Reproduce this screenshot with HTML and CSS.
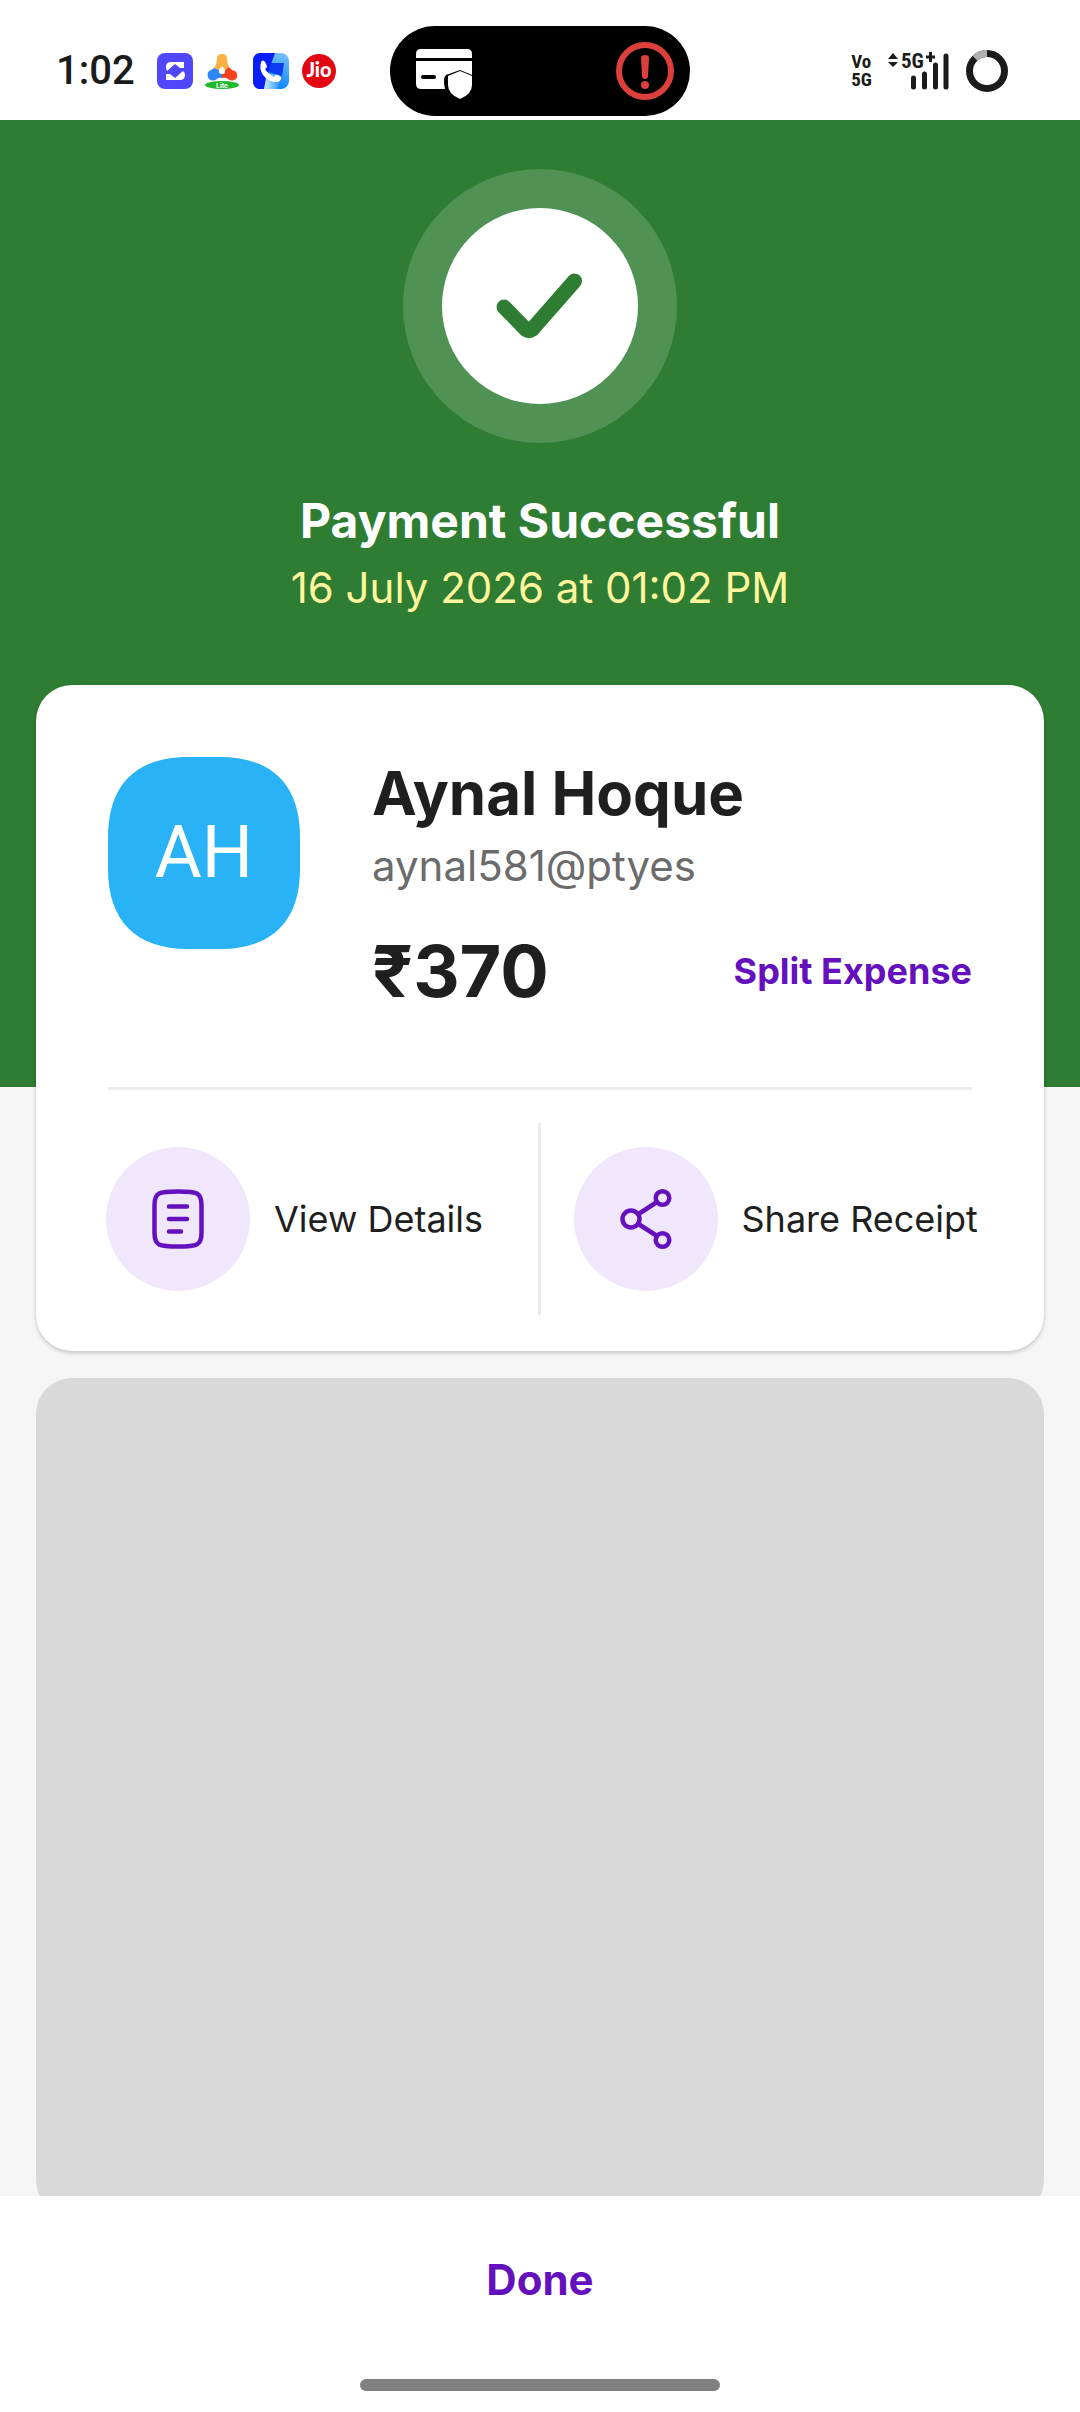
FILE: index.html
```html
<!DOCTYPE html>
<html lang="en">
<head>
<meta charset="utf-8">
<meta name="viewport" content="width=device-width, initial-scale=1">
<title>Payment Successful</title>
<link rel="stylesheet" href="styles.css">
</head>
<body>
<header class="status">
  <div class="status-left">
    <time class="clock">1:02</time>
    <svg class="app" viewBox="0 0 36 36" aria-hidden="true">
      <rect width="36" height="36" rx="8" fill="#5046fa"/>
      <path d="M14 9h13v6h-4l-5-4-8 7q-1-2-1-4 0-5 5-5zM9 21h4l5 4 8-7q2 1 2 4 0 5-5 5H9z" fill="#fff"/>
    </svg>
    <svg class="app" viewBox="0 0 36 36" aria-hidden="true">
      <path d="M12 6q0-5 5-5t5 5q0 4 2 8l-4 3-3-4-3 4-5-2q3-4 3-9z" fill="#fbb040"/>
      <path d="M9 15l5 2q-1 4 3 4v4q-3-1-5 1-4 3-8 0-3-5 0-8 3-1 5-3z" fill="#2f86f6"/>
      <path d="M24 14l-4 3q1 4-3 4v4q4-1 6 1 4 3 8 0 3-5-1-8-4-1-6-4z" fill="#f4421c"/>
      <ellipse cx="17" cy="32" rx="17" ry="4" fill="#1fb92c"/>
      <text x="17" y="35" class="lite">Lite</text>
    </svg>
    <svg class="app" viewBox="0 0 36 36" aria-hidden="true">
      <defs>
        <linearGradient id="sky" x1="1" y1="0" x2="0.700" y2="1"><stop offset="0" stop-color="#7cc4ff"/><stop offset="1" stop-color="#0a84ff"/></linearGradient>
        <linearGradient id="pale" x1="0" y1="0" x2="1" y2="0"><stop offset="0" stop-color="#cdebff"/><stop offset="1" stop-color="#0a84ff"/></linearGradient>
      </defs>
      <rect width="36" height="36" rx="8" fill="url(#sky)"/>
      <path d="M8 0h14l-5 14-6 22H8q-8 0-8-8V8q0-8 8-8z" fill="#0b1ff5"/>
      <path d="M14 20l16 4-6 12H11z" fill="url(#pale)"/>
      <path d="M18 10h13l-2 13-14-4z" fill="#0b3bf0"/>
      <path d="M8 9q2-3 4 0l2 4q0 2-2 3 3 5 9 8 1-3 4-2l3 2q1 3-3 5-9 1-15-7-4-6-2-13z" fill="#fff"/>
    </svg>
    <svg class="app" viewBox="0 0 36 36" aria-hidden="true">
      <circle cx="18" cy="18" r="17" fill="#e30613"/>
      <text x="18" y="24" class="jio">Jio</text>
    </svg>
  </div>
  <div class="island">
    <svg class="pay-shield" viewBox="0 0 57 57" aria-hidden="true">
      <path d="M0 15v-4q0-5 5-5h46q5 0 5 5v4zM0 18h56v14l-12-5-14 5q-2 2-2 6 0 4 1 8H5q-5 0-5-5z" fill="#fff"/>
      <path d="M7 34h11" stroke="#000" stroke-width="4" stroke-linecap="round"/>
      <path d="M44 28l12 5v9q0 9-12 14-12-5-12-14v-9z" fill="#fff"/>
    </svg>
    <svg class="warn" viewBox="0 0 58 58" aria-hidden="true">
      <circle cx="29" cy="29" r="26" fill="none" stroke="#dc403d" stroke-width="6"/>
      <path d="M25 16q0-3 4-3t4 3l-1 18q0 3-3 3t-3-3z" fill="#dc403d"/>
      <circle cx="29" cy="43" r="4" fill="#dc403d"/>
    </svg>
  </div>
  <div class="status-right">
    <div class="volte"><span>Vo</span><span>5G</span></div>
    <svg class="signal" viewBox="0 -8 62 56" aria-hidden="true">
      <path d="M5 2l5 6H0zM0 11h10l-5 5z" fill="#1b1b1b"/>
      <text x="13" y="17" class="net">5G</text>
      <path d="M38 6h9M42.500 1v10" stroke="#1b1b1b" stroke-width="3"/>
      <path d="M25.500 27v9M36.500 23v13M47.500 14v22M58 5v31" stroke="#1b1b1b" stroke-width="5" stroke-linecap="round"/>
    </svg>
    <svg class="battery" viewBox="0 0 42 42" aria-hidden="true">
      <circle cx="21" cy="21" r="17.500" fill="none" stroke="#1b1b1b" stroke-width="7"/>
      <path d="M9 8.200A17.500 17.500 0 0 1 21 3.500" fill="none" stroke="#b0b0b0" stroke-width="7"/>
    </svg>
  </div>
</header>

<main class="content">
  <section class="hero">
    <div class="badge">
      <svg class="badge-disc" viewBox="0 0 196 196" aria-hidden="true">
        <circle cx="98" cy="98" r="98" fill="#fff"/>
        <path d="M62 99L84 121.500Q87 123.500 90 121.500L132.500 73" fill="none" stroke="#2e7d32" stroke-width="15" stroke-linecap="round" stroke-linejoin="round"/>
      </svg>
    </div>
    <h1 class="title">Payment Successful</h1>
    <p class="date">16 July 2026 at 01:02 PM</p>
  </section>

  <section class="card">
    <div class="payee">
      <div class="avatar">
        <svg class="avatar-shape" viewBox="0 0 192 192" aria-hidden="true">
          <path d="M80 0h32C164 0 192 28 192 80v32c0 52-28 80-80 80H80C28 192 0 164 0 112V80C0 28 28 0 80 0z" fill="#29b3f6"/>
        </svg>
        <span class="initials">AH</span>
      </div>
      <div class="info">
        <h2 class="name">Aynal Hoque</h2>
        <p class="vpa">aynal581@ptyes</p>
        <div class="amount-row">
          <strong class="amount">₹370</strong>
          <button class="link-button" type="button">Split Expense</button>
        </div>
      </div>
    </div>
    <hr class="rule">
    <div class="actions">
      <button class="action action-first" type="button">
        <span class="action-icon">
          <svg class="glyph" viewBox="0 0 72 72" aria-hidden="true">
            <path d="M36 8.500C55 8.500 59.500 9.500 59.500 22V50C59.500 62.500 55 63.500 36 63.500S12.500 62.500 12.500 50V22C12.500 9.500 17 8.500 36 8.500z"/>
            <path d="M27 23.500h18M27 36h18M27 48.500h12"/>
          </svg>
        </span>
        <span>View Details</span>
      </button>
      <span class="split"></span>
      <button class="action" type="button">
        <span class="action-icon">
          <svg class="glyph" viewBox="0 0 72 72" aria-hidden="true">
            <circle cx="21" cy="36" r="8.500"/><circle cx="52.500" cy="15" r="6.800"/><circle cx="52.500" cy="57" r="6.800"/>
            <path d="M28.500 31L47 19M28.500 41L47 53"/>
          </svg>
        </span>
        <span>Share Receipt</span>
      </button>
    </div>
  </section>

  <section class="placeholder" aria-label="Offers"></section>
</main>

<footer class="footer">
  <button class="done" type="button">Done</button>
  <div class="home-bar"></div>
</footer>
</body>
</html>
```
FILE: styles.css
```css
* { box-sizing: border-box; margin: 0; padding: 0; }

body {
  height: 100vh;
  display: flex;
  flex-direction: column;
  background: #f5f5f5;
  color: #1f1f1f;
  font-family: Inter, "Noto Sans", sans-serif;
}

svg { display: block; }

button {
  border: 0;
  background: none;
  color: inherit;
  font: inherit;
  cursor: pointer;
}

/* Status bar */
.status {
  flex: none;
  height: 120px;
  padding-top: 20px;
  display: grid;
  grid-template-columns: 1fr 300px 1fr;
  align-items: center;
  background: #fff;
  color: #1b1b1b;
}
.status-left { display: flex; align-items: center; gap: 12px; padding-left: 56px; }
.clock { font: 500 40px/48px Roboto, sans-serif; margin-right: 10px; }
.app { width: 36px; height: 36px; }
.lite { font: 700 7px Roboto, sans-serif; fill: #fff; text-anchor: middle; }
.jio { font: 900 20px Lato, sans-serif; fill: #fff; text-anchor: middle; }
.status-left, .status-right { align-self: start; height: 102px; }
.island {
  height: 90px;
  border-radius: 45px;
  background: #000;
  display: flex;
  align-items: center;
  justify-content: space-between;
  padding: 0 16px 0 26px;
}
.pay-shield { width: 57px; height: 57px; }
.warn { width: 58px; height: 58px; }
.status-right {
  display: flex;
  align-items: center;
  justify-content: flex-end;
  gap: 16px;
  padding-right: 72px;
}
.volte {
  display: flex;
  flex-direction: column;
  font: 700 19px/18px "Roboto Condensed", "Liberation Sans Narrow", Roboto, sans-serif;
}
.signal { width: 62px; height: 56px; }
.net { font: 700 21px "Roboto Condensed", "Liberation Sans Narrow", Roboto, sans-serif; fill: #1b1b1b; }
.battery { width: 42px; height: 42px; }

/* Scrolling content */
.content { flex: 1; min-height: 0; overflow: hidden; }
.hero {
  padding: 49px 36px 472px;
  display: flex;
  flex-direction: column;
  align-items: center;
  background: #2e7d32;
  text-align: center;
}
.badge {
  width: 274px;
  height: 274px;
  border-radius: 50%;
  display: grid;
  place-items: center;
  background: #509254;
}
.badge-disc { width: 196px; height: 196px; }
.title { margin-top: 48px; font-size: 48px; line-height: 60px; font-weight: 700; color: #fff; }
.date { margin-top: 10px; font-size: 42px; line-height: 54px; color: #fff59d; }

.card {
  margin: -402px 36px 0;
  padding: 72px 0 36px;
  border-radius: 36px;
  background: #fff;
  box-shadow: 0 2px 4px rgba(0, 0, 0, 0.2);
  position: relative;
}
.payee { display: flex; gap: 72px; padding: 0 72px; }
.avatar { flex: none; width: 192px; height: 192px; display: grid; place-items: center; }
.avatar-shape, .initials { grid-area: 1 / 1; }
.initials { color: #fff; font: 400 72px/84px Roboto, sans-serif; }
.info { flex: 1; }
.name { font-size: 60px; line-height: 72px; font-weight: 700; }
.vpa { margin-top: 10px; font-size: 42px; line-height: 54px; color: #6b6b6b; }
.amount-row { display: flex; align-items: center; justify-content: space-between; margin-top: 36px; }
.amount { font-size: 72px; line-height: 84px; font-weight: 700; }
.link-button { font-size: 36px; line-height: 48px; font-weight: 700; color: #6411bd; }
.rule { margin: 74px 72px 0; border: 0; height: 3px; background: #ebebeb; }

.actions { margin-top: 33px; display: grid; grid-template-columns: 1fr 3px 1fr; height: 192px; padding-right: 2px; }
.split { background: #ebebeb; }
.action {
  display: flex;
  align-items: center;
  gap: 24px;
  padding-left: 33px;
  font-size: 36px;
  line-height: 48px;
  white-space: nowrap;
}
.action-first { padding-left: 70px; }
.action-icon {
  width: 144px;
  height: 144px;
  border-radius: 50%;
  display: grid;
  place-items: center;
  background: #f1e7fc;
}
.glyph {
  width: 72px;
  height: 72px;
  fill: none;
  stroke: #6411bd;
  stroke-width: 4.5;
  stroke-linecap: round;
}

.placeholder { margin: 27px 36px 0; height: 838px; border-radius: 36px; background: #d9d9d9; }

/* Bottom bar */
.footer {
  flex: none;
  padding: 54px 0 21px;
  display: flex;
  flex-direction: column;
  align-items: center;
  gap: 69px;
  background: #fff;
}
.done { padding: 3px 60px; font-size: 42px; line-height: 54px; font-weight: 700; color: #6411bd; }
.home-bar { width: 360px; height: 12px; border-radius: 6px; background: #808080; }
```
